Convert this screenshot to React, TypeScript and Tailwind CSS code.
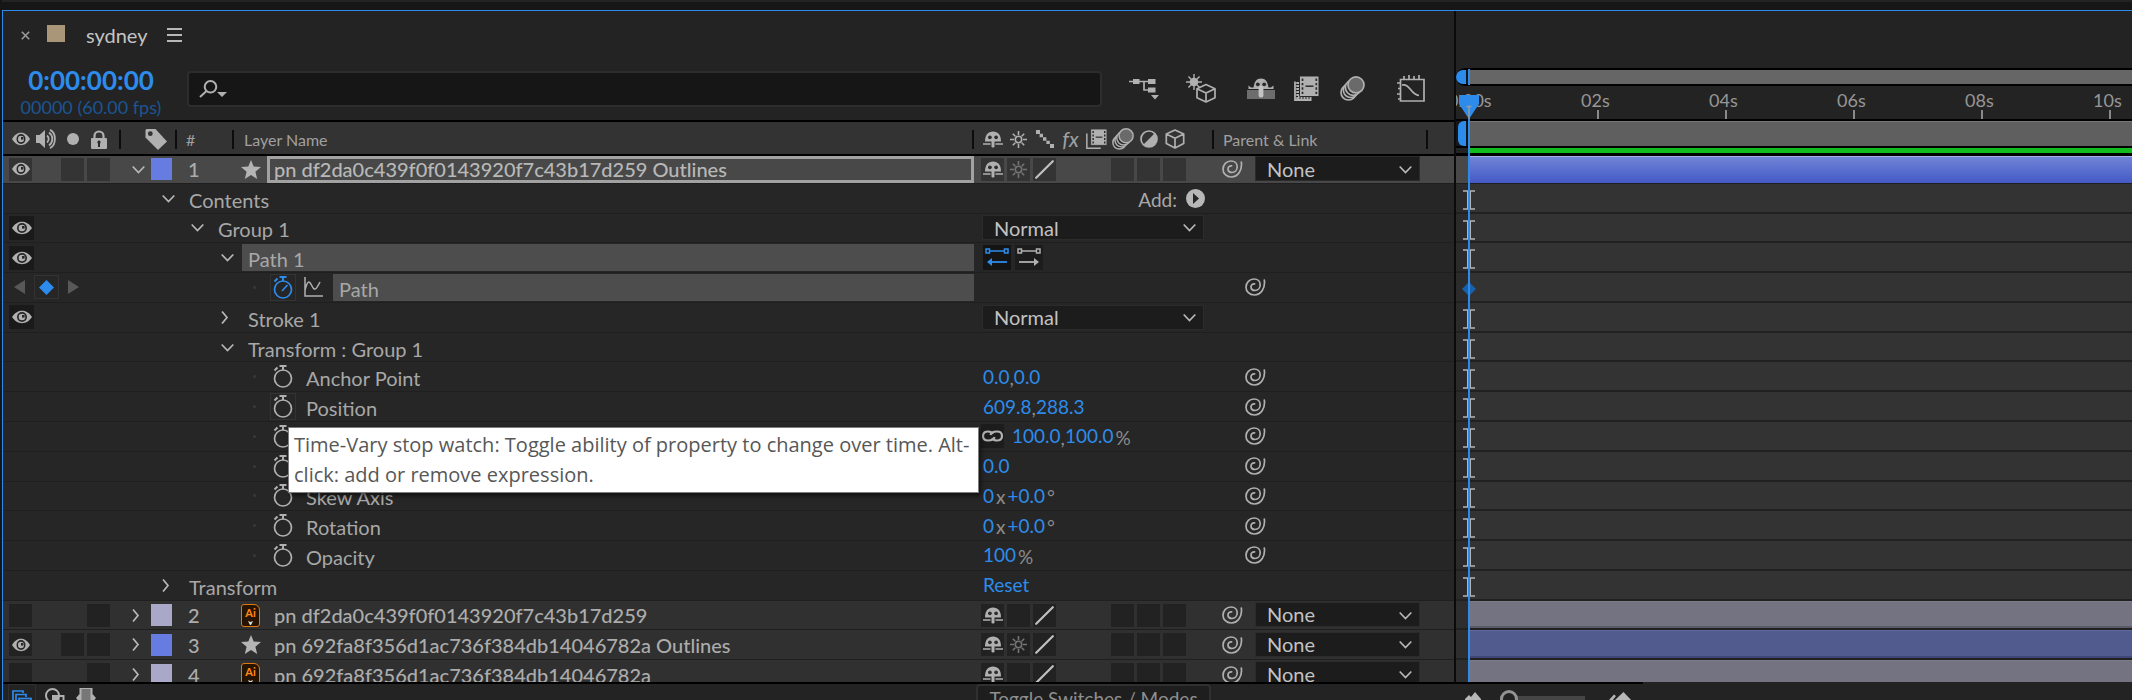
import type { ReactNode } from "react";

const ICON = "#b0b0b0";
const BLUE = "#2d8ceb";

function Eye({ small = false }: { small?: boolean }) {
  return (
    <svg width={small ? 18 : 20} height="14" viewBox="0 0 20 14" preserveAspectRatio="none" aria-hidden="true">
      <path d="M0 7C3 2.500 6.500.800 10 .800S17 2.500 20 7c-3 4.500-6.500 6.200-10 6.200S3 11.500 0 7Z" fill={ICON} />
      <circle cx="10" cy="7" r="5" fill="#262626" />
      <circle cx="10" cy="7" r="3.300" fill={ICON} />
      <rect x="10" y="5" width="2.600" height="2.600" fill="#262626" />
    </svg>
  );
}

function Speaker() {
  return (
    <svg width="21" height="20" viewBox="0 0 21 20" fill="none" stroke={ICON} strokeWidth="1.800" aria-hidden="true">
      <path d="M0 6h3.500L9 1v18l-5.500-5H0Z" fill={ICON} stroke="none" />
      <path d="M11 6.500a4.500 4.500 0 0 1 0 7M13 3.500a8 8 0 0 1 0 13M14 .900c6.500 3 6.500 15.200 0 18.200" />
    </svg>
  );
}

function Lock() {
  return (
    <svg width="16" height="19" viewBox="0 0 16 19" aria-hidden="true">
      <path d="M3.500 9V6a4.500 4.500 0 0 1 9 0v3" fill="none" stroke={ICON} strokeWidth="2.200" />
      <rect y="8" width="16" height="11" rx="1" fill={ICON} />
      <path d="M8 10.500a1.700 1.700 0 0 1 1 3V17H7v-3.500a1.700 1.700 0 0 1 1-3Z" fill="#2a2a2a" />
    </svg>
  );
}

function Tag() {
  return (
    <svg width="22" height="21" viewBox="0 0 22 21" aria-hidden="true">
      <path d="M1.500 0h9L22 12.500 13 21 .500 8.500V1Z" fill={ICON} />
      <circle cx="5.300" cy="4.700" r="2.400" fill="#333" />
    </svg>
  );
}

function Shy() {
  return (
    <svg width="20" height="17" viewBox="0 0 20 17" aria-hidden="true">
      <path d="M2 10.500C2 4 5 .500 10 .500s8 3.500 8 10Z" fill={ICON} />
      <circle cx="6.900" cy="6.300" r="1.900" fill="#2e2e2e" />
      <circle cx="13.100" cy="6.300" r="1.900" fill="#2e2e2e" />
      <rect x="8.500" y="7" width="3" height="9.500" rx="1.300" fill={ICON} />
      <path d="M0 13h7.500M12.500 13H20" stroke={ICON} strokeWidth="1.400" />
    </svg>
  );
}

function Sun({ dim = false }: { dim?: boolean }) {
  return (
    <svg width="17" height="17" viewBox="0 0 17 17" fill="none" stroke={dim ? "#747474" : ICON} strokeWidth="1.600" aria-hidden="true">
      <circle cx="8.500" cy="8.500" r="3.200" />
      <path d="M8.500 0v4M8.500 13v4M0 8.500h4M13 8.500h4M2.800 2.800l2.500 2.500M11.700 11.700l2.500 2.500M14.200 2.800l-2.500 2.500M5.300 11.700l-2.500 2.500" />
    </svg>
  );
}

function Stairs() {
  return (
    <svg width="18" height="18" viewBox="0 0 18 18" fill={ICON} aria-hidden="true">
      <path d="M0 0h4v4H0ZM3.600 3.800h3.400v3.400H3.600ZM7 7.300h3.400v3.400H7ZM10.400 10.700h3.400v3.400h-3.400ZM14 14h4v4h-4Z" />
    </svg>
  );
}

function Slash() {
  return (
    <svg width="19" height="19" viewBox="0 0 19 19" aria-hidden="true">
      <path d="M1.200 17.800 17.800 1.200" stroke="#c0c0c0" strokeWidth="2.200" strokeLinecap="round" />
    </svg>
  );
}

function Film({ big = false }: { big?: boolean }) {
  return (
    <svg width={big ? 25 : 21} height={big ? 25 : 20} viewBox="0 0 25 25" preserveAspectRatio="none" aria-hidden="true">
      <path d="M1 5.500v18.500h16.500" fill="none" stroke={ICON} strokeWidth="1.800" />
      {big && <path d="M4 6v15.500h14" fill="none" stroke={ICON} strokeWidth="3.500" strokeDasharray="2 1" />}
      <rect x="5.500" y="0" width="19.500" height="20.500" rx="1" fill={ICON} stroke="#282828" strokeWidth="1" />
      <path d="M8.500 2.500v16M22.300 2.500v16" stroke="#2c2c2c" strokeWidth="1.700" strokeDasharray="2.400 2" />
      <path d="M11.500 10.200h8" stroke="#2c2c2c" strokeWidth="1.500" />
    </svg>
  );
}

function MotionBlur({ big = false }: { big?: boolean }) {
  return (
    <svg width={big ? 25 : 22} height={big ? 25 : 22} viewBox="0 0 25 25" fill="#282828" stroke={ICON} strokeWidth="1.700" aria-hidden="true">
      <circle cx="8.500" cy="16.500" r="7.500" />
      <circle cx="10.800" cy="14" r="7.500" />
      <circle cx="13.200" cy="11.500" r="7.800" />
      <circle cx="16" cy="8.900" r="8" fill="#6a6a6a" />
    </svg>
  );
}

function Adjustment() {
  return (
    <svg width="18" height="18" viewBox="0 0 18 18" aria-hidden="true">
      <circle cx="9" cy="9" r="8" fill="none" stroke={ICON} strokeWidth="1.700" />
      <path d="M14.700 3.300A8 8 0 0 1 3.300 14.700Z" fill={ICON} />
    </svg>
  );
}

function Cube() {
  return (
    <svg width="20" height="20" viewBox="0 0 20 20" fill="none" stroke={ICON} strokeWidth="1.700" strokeLinejoin="round" aria-hidden="true">
      <path d="M10 1l8.700 4v9.500L10 19l-8.700-4.500V5ZM1.300 5 10 9.200 18.700 5M10 9.200V19" />
    </svg>
  );
}

function Flowchart() {
  return (
    <svg width="30" height="22" viewBox="0 0 30 22" aria-hidden="true">
      <path d="M0 3.500h26M15 3.500V12h10" fill="none" stroke={ICON} strokeWidth="1.700" />
      <path d="M4 1h6.500v5H4ZM19 1h7.500v5H19ZM19 9.500h7.500v5H19ZM22 17h8l-4 4.500Z" fill={ICON} />
    </svg>
  );
}

function SunCube() {
  return (
    <svg width="30" height="29" viewBox="0 0 30 29" fill="none" stroke={ICON} strokeWidth="1.700" strokeLinejoin="round" aria-hidden="true">
      <circle cx="8" cy="8" r="4.300" fill={ICON} stroke="none" />
      <path d="M8 0v16M0 8h16M2.400 2.400l11.200 11.200M13.600 2.400 2.400 13.600" strokeWidth="1.400" />
      <path d="M20 10.500l9 4.300v9L20 28l-9-4.200v-9Z" fill="#232323" />
      <path d="M11 14.800l9 4.200 9-4.200M20 19v9" />
    </svg>
  );
}

function ShyAll() {
  return (
    <svg width="28" height="22" viewBox="0 0 28 22" aria-hidden="true">
      <rect y="12" width="28" height="9" fill="#6d6d6d" />
      <path d="M1.500 11V7.500l2.500 2h2.500C7.500 3.500 9.500.500 14 .500s6.500 3 7.500 9H24l2.500-2V11Z" fill={ICON} />
      <circle cx="10.800" cy="6.300" r="1.900" fill="#2a2a2a" />
      <circle cx="17.200" cy="6.300" r="1.900" fill="#2a2a2a" />
      <rect x="11.600" y="8" width="4.800" height="11.500" rx="2" fill="#c4c4c4" />
    </svg>
  );
}

function GraphEditor() {
  return (
    <svg width="28" height="27" viewBox="0 0 28 27" fill="none" stroke={ICON} strokeWidth="1.700" aria-hidden="true">
      <path d="M3.500 4.500h23.500V26H3.500ZM7 1v3M12 0v4.500M17 1v3.500M22 0v4.500M0 8h3.500M1 13.500h2.500M0 19h3.500M1 24h2.500" />
      <path d="M5 10c9-1 8 9.500 17 10.500" />
    </svg>
  );
}

function Spiral() {
  return (
    <svg width="21" height="18" viewBox="0 0 21 18" fill="none" stroke={ICON} strokeWidth="1.700" strokeLinecap="round" aria-hidden="true">
      <path d="M19.300 2C20.500 10 16 17 9.300 17 4.500 17 1 13.500 1 9.200 1 4.500 4.500 1 9 1c3.800 0 6.200 2.600 6.200 5.800 0 3.600-2.500 5.700-5.200 5.700-2.300 0-4-1.500-4-3.600C6 7 7.500 5.600 9.600 5.800" />
    </svg>
  );
}

function Star() {
  return (
    <svg width="20" height="19" viewBox="0 0 20 19" fill="#b4b4b4" aria-hidden="true">
      <path d="m10 0 2.700 6.600 7.300.500-5.600 4.600L16.200 19 10 15 3.800 19l1.800-7.300L0 7.100l7.300-.500Z" />
    </svg>
  );
}

function AiFile() {
  return (
    <span className="flex h-[23px] w-[19px] flex-col items-center rounded-[3px] rounded-tr-md border border-[#e07812] bg-[#271400] text-[11px] leading-4 font-bold text-[#ff8a17]">
      Ai
      <svg width="5" height="4" viewBox="0 0 5 4" aria-hidden="true">
        <path d="M0 0l2.500 1L5 0 3 4H2Z" fill="#ddd" />
      </svg>
    </span>
  );
}

function Chevron({ open = false }: { open?: boolean }) {
  return (
    <svg width="13" height="13" viewBox="0 0 13 13" fill="none" stroke="#b8b8b8" strokeWidth="1.700" aria-hidden="true">
      {open ? <path d="M.700 3.500 6.500 9.500 12.300 3.500" /> : <path d="M1 .500 6 6.500 1 12.500" />}
    </svg>
  );
}

function Stopwatch({ on = false }: { on?: boolean }) {
  return (
    <svg width="20" height="23" viewBox="0 0 20 23" fill="none" stroke={on ? BLUE : ICON} strokeWidth="1.700" aria-hidden="true">
      <circle cx="10" cy="13.500" r="8.500" />
      <path d="M10 5V1.500M6.500 1h7M1.500 5.500l3-3" strokeWidth="2" />
      {on && <path d="M9 15l5.500-6" />}
    </svg>
  );
}

function MiniGraph() {
  return (
    <svg width="19" height="20" viewBox="0 0 19 20" fill="none" stroke={ICON} strokeWidth="1.500" aria-hidden="true">
      <path d="M1 0v19h18M1 13C4 2 5.500 4 8 9s4 4 8-4" />
    </svg>
  );
}

function Direction({ reverse = false }: { reverse?: boolean }) {
  const color = reverse ? BLUE : ICON;
  return (
    <svg width="24" height="19" viewBox="0 0 24 19" fill="none" stroke={color} strokeWidth="1.500" aria-hidden="true">
      <path d="M1 1h3.500v4H1ZM19.500 1H23v4h-3.500ZM4.500 3h15" />
      <path d={reverse ? "M6 14h16" : "M2 14h16"} strokeWidth="1.800" />
      <path d={reverse ? "M2 14l5-4v8Z" : "M22 14l-5-4v8Z"} fill={color} stroke="none" />
    </svg>
  );
}

function Link() {
  return (
    <svg width="21" height="12" viewBox="0 0 21 12" fill="none" stroke={ICON} strokeWidth="2.200" aria-hidden="true">
      <path d="M12.500 7C12 9.500 9.500 10.500 6 10.500c-3 0-5-1.500-5-4.500s2-4.500 5-4.500c2.500 0 4 .800 4.800 2.500" />
      <path d="M8.500 5C9 2.500 11.500 1.500 15 1.500c3 0 5 1.500 5 4.500s-2 4.500-5 4.500c-2.500 0-4-.800-4.800-2.500" />
    </svg>
  );
}

function Pick({ label, value, className }: { label: string; value: string; className: string }) {
  return (
    <span className={`relative ${className}`}>
      <select
        aria-label={label}
        defaultValue={value}
        className="h-[25px] w-full appearance-none border border-[#2b2b2b] bg-[#1c1c1c] pl-[11px] text-[20px] leading-[22px] text-[#c2c2c2] outline-none"
      >
        <option>{value}</option>
      </select>
      <span className="pointer-events-none absolute inset-y-0 right-2 flex items-center">
        <Chevron open />
      </span>
    </span>
  );
}

function Box({ label, fill, children }: { label: string; fill: string; children?: ReactNode }) {
  return (
    <button type="button" aria-label={label} className={`flex h-[23px] w-[23px] shrink-0 items-center justify-center ${fill}`}>
      {children}
    </button>
  );
}

type LayerData = { id: number; name: string; shape: boolean; selected?: boolean };

function LayerRow({ id, name, shape, selected }: LayerData) {
  const fill = selected ? "bg-[#343434]" : "bg-[#222222]";
  return (
    <div className={`flex items-center overflow-hidden border-b border-[#1f1f1f] ${selected ? "border-t-2 border-t-black bg-[#484848]" : "bg-[#303030]"}`}>
      <div className="flex w-[118px] shrink-0 items-center gap-[3px] pl-[6px]">
        <Box label="Video" fill={fill}>{shape && <Eye small />}</Box>
        <span className="w-[23px]" />
        {shape ? <Box label="Solo" fill={fill} /> : <span className="w-[23px]" />}
        <Box label="Lock" fill={fill} />
      </div>
      <div className="flex w-[56px] shrink-0 items-center gap-[6px] pl-[11px]">
        <button type="button" aria-label={`Expand layer ${id}`}><Chevron open={selected} /></button>
        <span className={`h-[22px] w-[21px] ${shape ? "bg-[#677ce0]" : "bg-[#a9a8c8]"}`} />
      </div>
      <div className="w-[57px] shrink-0 pl-[11px] text-[20px] leading-6 font-medium text-[#acacac]">{id}</div>
      <div className="flex min-w-0 flex-1 items-center gap-[6px] pl-[6px]">
        <span className="flex w-[21px] shrink-0 justify-center">{shape ? <Star /> : <AiFile />}</span>
        {selected ? (
          <input
            aria-label="Layer name"
            defaultValue={name}
            className="h-[27px] min-w-0 flex-1 border-[3px] border-[#a2a2a2] bg-[#484848] pl-[4px] text-[20px] leading-5 font-medium text-[#b8b8b8] outline-none"
          />
        ) : (
          <span className="truncate pl-[7px] text-[20px] leading-6 font-medium text-[#acacac]">{name}</span>
        )}
      </div>
      <div className="flex w-[240px] shrink-0 items-center gap-[3px] pl-[7px]">
        <Box label="Shy" fill={fill}><Shy /></Box>
        <Box label="Collapse transformations" fill={fill}>{shape && <Sun dim />}</Box>
        <Box label="Quality" fill={fill}><Slash /></Box>
        <span className="w-[23px]" />
        <span className="w-[23px]" />
        <Box label="Motion blur" fill={fill} />
        <Box label="Adjustment layer" fill={fill} />
        <Box label="3D layer" fill={fill} />
      </div>
      <div className="flex w-[240px] shrink-0 items-center gap-[12px] pl-[8px]">
        <button type="button" aria-label="Parent pick whip"><Spiral /></button>
        <Pick label={`Parent of layer ${id}`} value="None" className="w-[165px]" />
      </div>
    </div>
  );
}

type PropData = {
  name: string;
  indent: string;
  open?: boolean;
  eye?: boolean;
  lit?: boolean;
  keyed?: boolean;
  watch?: boolean;
  boxed?: boolean;
  value?: ReactNode;
  whip?: boolean;
};

function PropRow({ name, indent, open, eye, lit, keyed, watch, boxed, value, whip }: PropData) {
  return (
    <div className="flex items-center overflow-hidden border-b border-[#1f1f1f] bg-[#262626]">
      <div className="flex w-[118px] shrink-0 items-center pl-[6px]">
        {eye && (
          <button type="button" aria-label={`Show ${name}`} className="flex h-[24px] w-[25px] items-center justify-center bg-[#1a1a1a]">
            <Eye />
          </button>
        )}
        {keyed && (
          <span className="flex items-center gap-[9px] pl-[5px]">
            <button type="button" aria-label="Previous keyframe">
              <svg width="11" height="14" viewBox="0 0 11 14" aria-hidden="true"><path d="M11 0v14L0 7Z" fill="#585858" /></svg>
            </button>
            <button type="button" aria-label="Toggle keyframe" className="flex h-[24px] w-[25px] items-center justify-center border border-[#333]">
              <svg width="15" height="15" viewBox="0 0 15 15" aria-hidden="true"><path d="M7.500 0 15 7.500 7.500 15 0 7.500Z" fill={BLUE} /></svg>
            </button>
            <button type="button" aria-label="Next keyframe">
              <svg width="11" height="14" viewBox="0 0 11 14" aria-hidden="true"><path d="M0 0v14l11-7Z" fill="#585858" /></svg>
            </button>
          </span>
        )}
      </div>
      <div className={`flex min-w-0 flex-1 items-center ${indent}`}>
        {watch ? (
          <>
            <span className="h-[3px] w-[3px] rounded-full bg-[#3a3a3a]" />
            <button
              type="button"
              aria-label={`Time-Vary stop watch for ${name}`}
              className={`ml-[14px] flex h-[27px] w-[26px] shrink-0 items-center justify-center border ${boxed ? "border-[#333]" : "border-transparent"}`}
            >
              <Stopwatch on={keyed} />
            </button>
            {keyed && (
              <button type="button" aria-label="Include in graph editor" className="ml-[8px] shrink-0"><MiniGraph /></button>
            )}
          </>
        ) : (
          <button type="button" aria-label={`Expand ${name}`} className="w-[13px] shrink-0"><Chevron open={open} /></button>
        )}
        <span
          className={`h-[27px] pt-[4px] pl-[6px] text-[20px] leading-[23px] text-[#a8a8a8] ${
            keyed ? "ml-[10px] flex-1 bg-[#4d4d4d]" : lit ? "ml-[8px] flex-1 bg-[#4d4d4d]" : watch ? "ml-[4px]" : "ml-[8px]"
          }`}
        >
          {name}
        </span>
      </div>
      <div className="flex w-[240px] shrink-0 items-center pl-[9px] text-[19px] leading-6">{value}</div>
      <div className="flex w-[240px] shrink-0 pl-[31px]">
        {whip && <button type="button" aria-label="Expression pick whip"><Spiral /></button>}
      </div>
    </div>
  );
}

function Num({ children }: { children: ReactNode }) {
  return <button type="button" className="text-[#2d8ceb]">{children}</button>;
}

function Unit({ children }: { children: ReactNode }) {
  return <span className="px-[2px] pt-[3px] text-[#8c8c8c]">{children}</span>;
}

function Comma() {
  return <span className="pt-[3px] text-[#8c8c8c]">,</span>;
}

const first: LayerData = { id: 1, name: "pn df2da0c439f0f0143920f7c43b17d259 Outlines", shape: true, selected: true };

const rest: LayerData[] = [
  { id: 2, name: "pn df2da0c439f0f0143920f7c43b17d259", shape: false },
  { id: 3, name: "pn 692fa8f356d1ac736f384db14046782a Outlines", shape: true },
  { id: 4, name: "pn 692fa8f356d1ac736f384db14046782a", shape: false },
];

const blend = <Pick label="Blending mode" value="Normal" className="-ml-px w-[222px]" />;

const angle = (
  <>
    <Num>0</Num>
    <Unit>x</Unit>
    <Num>+0.0</Num>
    <Unit>°</Unit>
  </>
);

const props: PropData[] = [
  {
    name: "Contents",
    indent: "pl-[41px]",
    open: true,
    value: (
      <span className="flex w-[222px] items-center justify-end gap-[9px] text-[#a8a8a8]">
        <span className="pt-[4px]">Add:</span>
        <button type="button" aria-label="Add">
          <svg width="19" height="19" viewBox="0 0 19 19" aria-hidden="true">
            <circle cx="9.500" cy="9.500" r="9.500" fill="#b8b8b8" />
            <path d="M7 4v11l6-5.500Z" fill="#262626" />
          </svg>
        </button>
      </span>
    ),
  },
  { name: "Group 1", indent: "pl-[70px]", open: true, eye: true, value: blend },
  {
    name: "Path 1",
    indent: "pl-[100px]",
    open: true,
    eye: true,
    lit: true,
    value: (
      <span className="flex gap-[4px]">
        <button type="button" aria-label="Reverse path direction on" className="flex h-[25px] w-[28px] items-center justify-center bg-[#141414]">
          <Direction reverse />
        </button>
        <button type="button" aria-label="Reverse path direction off" className="flex h-[25px] w-[28px] items-center justify-center bg-[#1c1c1c]">
          <Direction />
        </button>
      </span>
    ),
  },
  { name: "Path", indent: "pl-[132px]", watch: true, keyed: true, boxed: true, whip: true },
  { name: "Stroke 1", indent: "pl-[100px]", eye: true, value: blend },
  { name: "Transform : Group 1", indent: "pl-[100px]", open: true },
  { name: "Anchor Point", indent: "pl-[132px]", watch: true, whip: true, value: <><Num>0.0</Num><Comma /><Num>0.0</Num></> },
  { name: "Position", indent: "pl-[132px]", watch: true, boxed: true, whip: true, value: <><Num>609.8</Num><Comma /><Num>288.3</Num></> },
  {
    name: "Scale",
    indent: "pl-[132px]",
    watch: true,
    whip: true,
    value: (
      <>
        <button type="button" aria-label="Constrain proportions" className="mr-[8px] -ml-[2px] flex h-[24px] w-[23px] items-center justify-center bg-[#1c1c1c]">
          <Link />
        </button>
        <Num>100.0</Num><Comma /><Num>100.0</Num><Unit>%</Unit>
      </>
    ),
  },
  { name: "Skew", indent: "pl-[132px]", watch: true, whip: true, value: <Num>0.0</Num> },
  { name: "Skew Axis", indent: "pl-[132px]", watch: true, whip: true, value: angle },
  { name: "Rotation", indent: "pl-[132px]", watch: true, whip: true, value: angle },
  { name: "Opacity", indent: "pl-[132px]", watch: true, whip: true, value: <><Num>100</Num><Unit>%</Unit></> },
  { name: "Transform", indent: "pl-[41px]", value: <Num>Reset</Num> },
];

function Divider() {
  return <span className="h-[19px] w-[2px] shrink-0 bg-[#0c0c0c]" />;
}

function HeadIcon({ children }: { children: ReactNode }) {
  return <span className="flex w-[23px] shrink-0 justify-center">{children}</span>;
}

function ColumnHeader() {
  return (
    <div className="flex h-[34px] items-center border-t-2 border-black bg-[#333] pt-[2px] text-[16px] leading-5 text-[#a0a0a0]">
      <div className="flex w-[118px] shrink-0 items-center gap-[3px] pl-[6px]">
        <HeadIcon><Eye small /></HeadIcon>
        <HeadIcon><Speaker /></HeadIcon>
        <HeadIcon><span className="h-[12px] w-[12px] rounded-full bg-[#b0b0b0]" /></HeadIcon>
        <HeadIcon><Lock /></HeadIcon>
        <span className="flex-1" />
        <Divider />
      </div>
      <div className="flex w-[56px] shrink-0 items-center justify-between pl-[24px]">
        <Tag />
        <Divider />
      </div>
      <div className="flex w-[57px] shrink-0 items-center justify-between pl-[9px]">
        <span className="pt-[2px]">#</span>
        <Divider />
      </div>
      <div className="flex flex-1 items-center justify-between pl-[10px]">
        <span className="pt-[2px]">Layer Name</span>
        <Divider />
      </div>
      <div className="flex w-[240px] shrink-0 items-center gap-[3px] pl-[7px]">
        <HeadIcon><Shy /></HeadIcon>
        <HeadIcon><Sun /></HeadIcon>
        <HeadIcon><Stairs /></HeadIcon>
        <HeadIcon><span className="text-[21px] italic">fx</span></HeadIcon>
        <HeadIcon><Film /></HeadIcon>
        <HeadIcon><MotionBlur /></HeadIcon>
        <HeadIcon><Adjustment /></HeadIcon>
        <HeadIcon><Cube /></HeadIcon>
        <span className="flex-1" />
        <Divider />
      </div>
      <div className="flex w-[214px] shrink-0 items-center justify-between pl-[9px]">
        <span className="pt-[2px]">Parent &amp; Link</span>
        <Divider />
      </div>
      <span className="w-[26px] shrink-0" />
    </div>
  );
}

function Toolbar() {
  return (
    <div className="flex h-[61px] shrink-0 items-start">
      <div className="flex w-[184px] shrink-0 flex-col items-center pt-[6px] pr-[8px]">
        <span className="text-[26px] leading-[30px] font-bold text-[#2d8ceb]">0:00:00:00</span>
        <span className="text-[18px] leading-6 text-[#1b5594]">00000 (60.00 fps)</span>
      </div>
      <label className="mt-[12px] flex h-[36px] min-w-0 flex-1 items-center rounded-[4px] border-2 border-[#2d2d2d] bg-[#161616] pl-[10px]">
        <svg width="28" height="18" viewBox="0 0 28 18" fill="none" stroke={ICON} strokeWidth="2" aria-hidden="true">
          <circle cx="11.500" cy="6.800" r="5.800" />
          <path d="M7.500 11 1 17" />
          <path d="M18 12h10l-5 5Z" fill={ICON} stroke="none" />
        </svg>
        <input aria-label="Search layers" className="min-w-0 flex-1 bg-transparent pl-2 text-[18px] text-[#c2c2c2] outline-none" />
      </label>
      <div className="flex w-[352px] shrink-0 items-center pt-[15px] pl-[27px]">
        <button type="button" aria-label="Composition flowchart"><Flowchart /></button>
        <button type="button" aria-label="Draft 3D" className="ml-[27px]"><SunCube /></button>
        <button type="button" aria-label="Hide shy layers" className="ml-[31px]"><ShyAll /></button>
        <button type="button" aria-label="Frame blending" className="ml-[19px]"><Film big /></button>
        <button type="button" aria-label="Motion blur" className="ml-[21px]"><MotionBlur big /></button>
        <button type="button" aria-label="Graph editor" className="ml-[32px]"><GraphEditor /></button>
      </div>
    </div>
  );
}

const clip: Record<number, string> = {
  2: "border-t border-b-2 border-t-[#7c7b8a] border-b-[#5b5a69] bg-[#747382]",
  3: "border-t border-b-2 border-t-[#6068a0] border-b-[#3f4778] bg-[#525b8e]",
  4: "border-t border-b-2 border-t-[#7c7b8a] border-b-[#5b5a69] bg-[#747382]",
};

function Tracks() {
  return (
    <div className="grid h-[536px] auto-rows-fr">
      <div className="flex border-t-2 border-b border-t-black border-b-[#1f1f1f]">
        <span className="w-[12px] shrink-0 bg-[#484848]" />
        <span className="flex-1 border-t border-[#a6b0e6] bg-linear-to-b from-[#7083d6] to-[#4459c6]" />
      </div>
      {props.map((p) => (
        <div key={p.name} className="flex border-b-2 border-[#212121]">
          <span className="w-[12px] shrink-0 bg-[#2b2b2b]" />
          <span className="flex-1 bg-[#333]" />
        </div>
      ))}
      {rest.map((l) => (
        <div key={l.id} className="flex border-b-2 border-[#212121]">
          <span className="w-[12px] shrink-0 bg-[#2e2e2e]" />
          <span className={`flex-1 ${clip[l.id]}`} />
        </div>
      ))}
    </div>
  );
}

function Playhead() {
  return (
    <div className="pointer-events-none absolute inset-y-0 left-[2px] flex w-[22px] flex-col items-center pt-[58px]">
      <span className="h-[16px] w-[2px] bg-[#2d8ceb]" />
      <svg width="20" height="24" viewBox="0 0 20 24" className="mt-[10px] shrink-0" aria-hidden="true">
        <path d="M0 0h20v9L10 24 0 9Z" fill={BLUE} />
        <path d="M10 11v13M7.500 11.500h5" stroke="#9a9a9a" strokeWidth="1.500" />
      </svg>
      <div className="relative w-[22px] flex-1">
        <div className="absolute inset-x-0 top-[66px] grid h-[417px] auto-rows-fr">
          {props.map((p) => (
            <span key={p.name} className="flex items-center justify-center">
              {p.keyed ? (
                <svg width="14" height="14" viewBox="0 0 14 14" aria-hidden="true"><path d="M7 0l7 7-7 7-7-7Z" fill="#1762ae" /></svg>
              ) : (
                <svg width="12" height="20" viewBox="0 0 12 20" fill="none" stroke="#b4b4b4" aria-hidden="true">
                  <path d="M0 1h12M0 19h12" strokeWidth="1.500" />
                  <path d="M6 1v18" strokeWidth="4" />
                </svg>
              )}
            </span>
          ))}
        </div>
        <span className="absolute inset-y-0 left-[10px] w-[2px] bg-[#2d8ceb]" />
      </div>
    </div>
  );
}

function TimeArea() {
  return (
    <section aria-label="Time graph" className="relative min-w-0 flex-1 overflow-hidden border-l-2 border-[#0a0a0a] pt-[57px]">
      <div className="flex h-[18px] items-stretch rounded-l-full border-y-2 border-black bg-[#161616]">
        <span className="w-[10px] rounded-l-full bg-[#2d8ceb]" />
        <span className="ml-[2px] flex-1 bg-[#666]" />
      </div>
      <div className="flex h-[33px] overflow-hidden pt-[4px] text-[18px] leading-[20px] text-[#979797]">
        <span className="-ml-[8px] w-[133px] shrink-0">0:00s</span>
        {["02s", "04s", "06s", "08s", "10s"].map((t) => (
          <span key={t} className="flex w-[128px] shrink-0 flex-col">
            {t}
            <span className="ml-[16px] h-[9px] w-[2px] bg-[#8a8a8a]" />
          </span>
        ))}
      </div>
      <div className="flex h-[29px] items-stretch border-y-2 border-black bg-[#161616]">
        <span className="ml-[2px] w-[8px] rounded-l-md bg-[#2d8ceb]" />
        <span className="ml-[2px] flex-1 border-t border-[#777] bg-[#5f5f5f]" />
      </div>
      <div className="flex h-[6px] bg-black pb-px">
        <span className="w-[12px] bg-[#232323]" />
        <span className="flex-1 bg-[#12bc1e]" />
      </div>
      <div className="h-[528px] overflow-hidden">
        <Tracks />
      </div>
      <Playhead />
    </section>
  );
}

function Footer() {
  return (
    <div className="flex h-[32px] shrink-0 items-start">
      <div className="flex w-[973px] shrink-0 items-start gap-[9px] border-t-2 border-black pl-[5px]">
        <button type="button" aria-label="Layer switches pane" className="flex h-[30px] w-[28px] justify-center border border-[#2f2f2f] pt-[5px]">
          <svg width="20" height="20" viewBox="0 0 20 20" fill="#232323" stroke={BLUE} strokeWidth="1.700" aria-hidden="true">
            <path d="M1 12V1h10v2M4 14V4.500h10V7" />
            <rect x="7" y="8.500" width="12" height="10" />
          </svg>
        </button>
        <button type="button" aria-label="Transfer controls pane" className="pt-[4px]">
          <svg width="20" height="20" viewBox="0 0 20 20" fill="none" stroke={ICON} strokeWidth="2" aria-hidden="true">
            <circle cx="7.500" cy="7.500" r="6.500" />
            <path d="M8 8h6.500v6H8Z" fill={ICON} stroke="none" />
            <path d="M8 8h10.500v10H8Z" />
          </svg>
        </button>
        <button type="button" aria-label="In and out pane" className="pt-[4px] pl-[2px]">
          <svg width="20" height="20" viewBox="0 0 20 20" aria-hidden="true">
            <path d="M3.500 0h13v6l3.500 4-10 12L0 10l3.500-4Z" fill={ICON} />
            <path d="M5.500 1h9v11l-4.500 5-4.500-5Z" fill="#777" />
          </svg>
        </button>
      </div>
      <div className="flex w-[477px] shrink-0 border-t-2 border-black">
        <button type="button" className="h-[30px] w-[235px] rounded-t-[4px] border-2 border-[#303030] bg-[#1e1e1e] text-[19px] leading-6 text-[#8f8f8f]">
          Toggle Switches / Modes
        </button>
      </div>
      <div className="flex w-[190px] items-start border-t-2 border-black pl-[12px]">
        <svg width="16" height="12" viewBox="0 0 16 12" className="mt-[8px]" aria-hidden="true">
          <path d="M0 7 4 3l2 2 4-5 6 7v5H0Z" fill="#b8b8b8" />
        </svg>
        <input
          type="range"
          aria-label="Zoom"
          defaultValue={0}
          className="mt-[12px] ml-[19px] h-[5px] w-[85px] appearance-none bg-[#454545] [&::-webkit-slider-thumb]:h-[18px] [&::-webkit-slider-thumb]:w-[18px] [&::-webkit-slider-thumb]:appearance-none [&::-webkit-slider-thumb]:rounded-full [&::-webkit-slider-thumb]:border-[3px] [&::-webkit-slider-thumb]:border-[#929292] [&::-webkit-slider-thumb]:bg-[#232323]"
        />
        <svg width="24" height="14" viewBox="0 0 24 14" className="mt-[8px] ml-[24px]" aria-hidden="true">
          <path d="M0 8 5 2.500l2 1.500-4 5v5H0ZM6 8l8.500-8L23 9v5H6Z" fill="#b8b8b8" />
        </svg>
      </div>
    </div>
  );
}

export default function App() {
  return (
    <div className="h-screen overflow-hidden bg-[#161616] font-['Lato','Noto_Sans',sans-serif]">
      <div className="ml-[2px] h-[2px] bg-[#232323]" />
      <main className="relative mt-[8px] ml-[2px] border-t border-l border-[#2d8ceb] bg-[#232323]">
        <div className="flex">
          <section aria-label="Layers" className="flex w-[1451px] shrink-0 flex-col">
            <div className="flex h-[48px] shrink-0 items-center pl-[18px]">
              <button type="button" aria-label="Close sydney">
                <svg width="9" height="9" viewBox="0 0 9 9" stroke="#9a9a9a" strokeWidth="1.600" aria-hidden="true">
                  <path d="M.800.800l7.400 7.400M8.200.800.800 8.200" />
                </svg>
              </button>
              <span className="mb-1 ml-[17px] h-[17px] w-[18px] bg-[#a99678]" />
              <span className="ml-[21px] text-[20px] leading-6 text-[#c4c4c4]">sydney</span>
              <button type="button" aria-label="Panel menu" className="ml-[20px]">
                <svg width="15" height="14" viewBox="0 0 15 14" stroke="#b8b8b8" strokeWidth="1.800" aria-hidden="true">
                  <path d="M0 1h15M0 7h15M0 13h15" />
                </svg>
              </button>
            </div>
            <Toolbar />
            <ColumnHeader />
            <div className="h-[528px] overflow-hidden">
              <div className="grid h-[536px] auto-rows-fr">
                <LayerRow {...first} />
                {props.map((p) => (
                  <PropRow key={p.name} {...p} />
                ))}
                {rest.map((l) => (
                  <LayerRow key={l.id} {...l} />
                ))}
              </div>
            </div>
          </section>
          <TimeArea />
        </div>
        <Footer />
        <div
          role="tooltip"
          className="absolute top-[416px] left-[285px] w-[691px] border border-[#7d7d7d] bg-white px-[5px] py-[2px] font-['Open_Sans','Noto_Sans',sans-serif] text-[20px] leading-[30px] text-[#575757] shadow-[2px_3px_4px_rgba(0,0,0,0.5)]"
        >
          Time-Vary stop watch: Toggle ability of property to change over time. Alt-click: add or remove expression.
        </div>
      </main>
    </div>
  );
}
